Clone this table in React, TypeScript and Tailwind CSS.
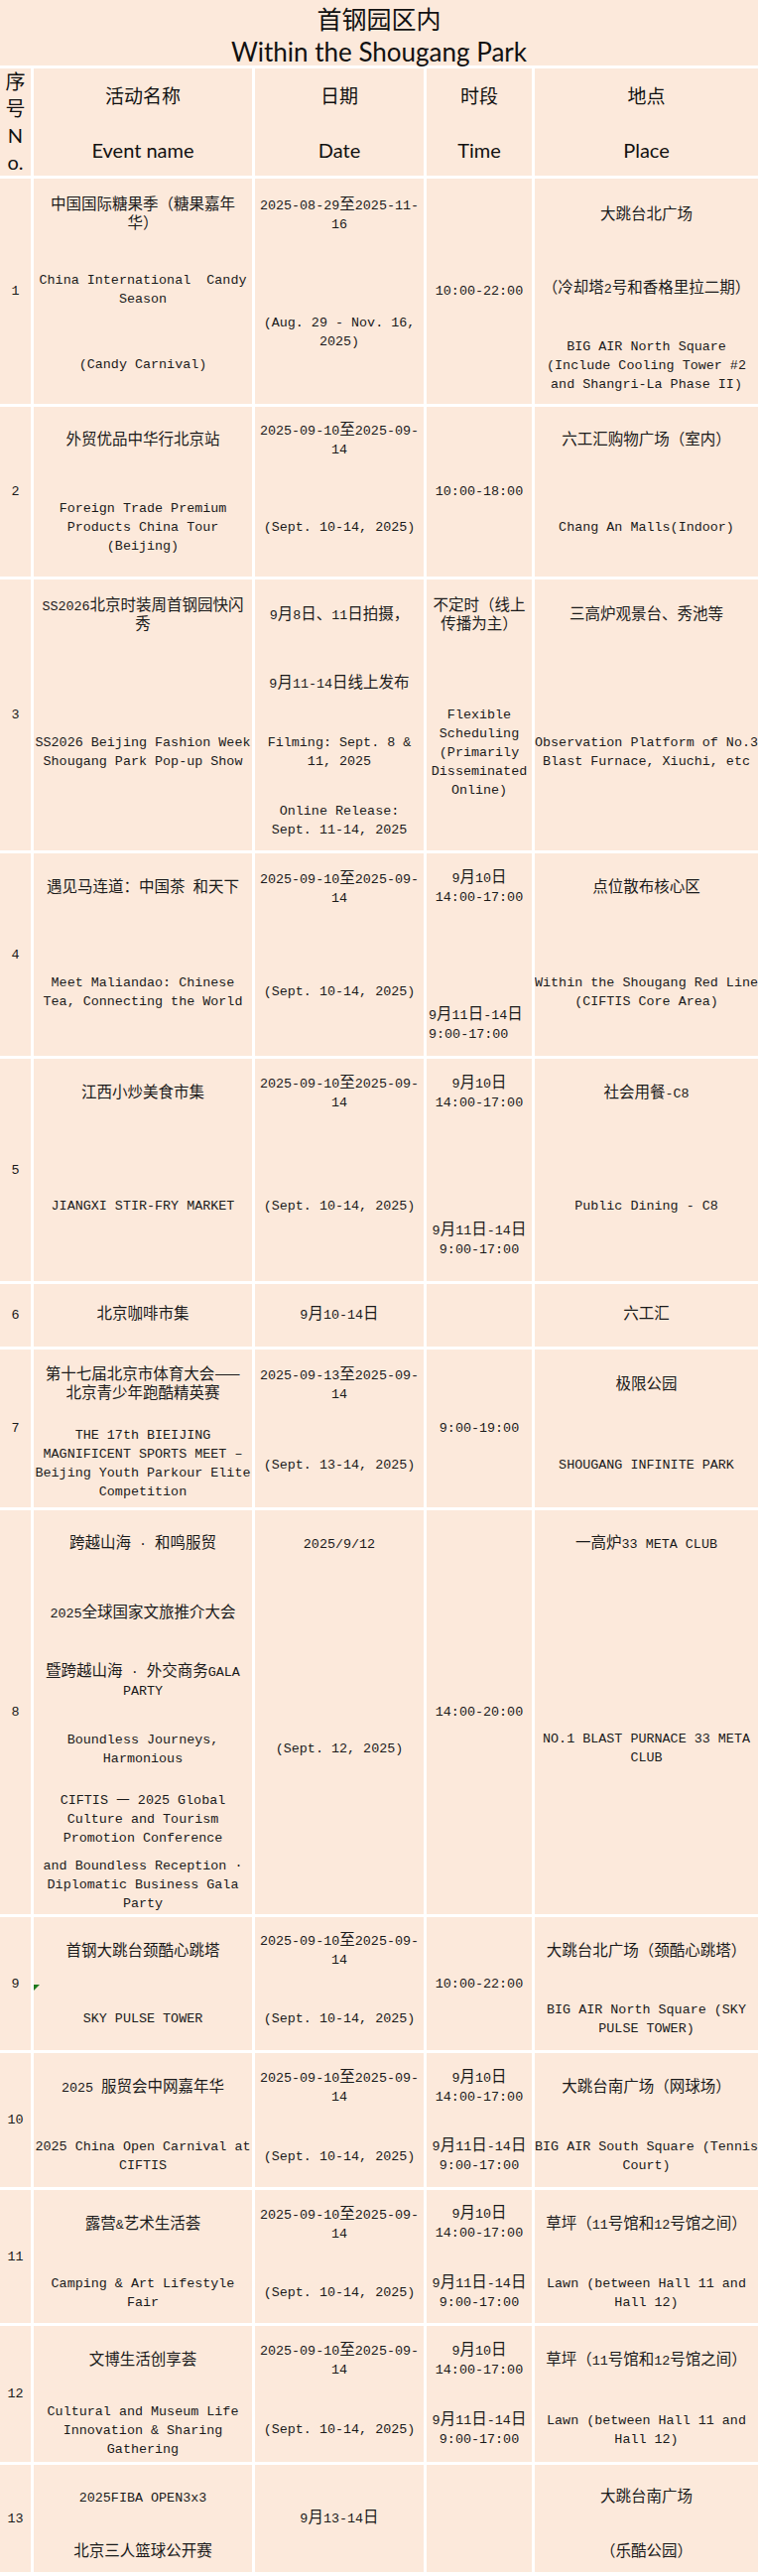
import React from "react";

type P = { m: string; l: string[]; a?: string };
type Cell = { ps: P[]; c?: boolean; tri?: boolean };
type Row = { h: string; no: string; cells: Cell[] };

const D1 = ["2025-09-10至2025-09-", "14"];
const SEPT = ["(Sept. 10-14, 2025)"];
const T1 = ["9月10日", "14:00-17:00"];
const T2 = ["9月11日-14日", "9:00-17:00"];

const rows: Row[] = [
  {
    h: "h-[227px]",
    no: "1",
    cells: [
      {
        ps: [
          { m: "mt-[18px]", l: ["中国国际糖果季（糖果嘉年", "华）"] },
          { m: "mt-[37px]", l: ["China International  Candy", "Season"] },
          { m: "mt-[47px]", l: ["(Candy Carnival)"] },
        ],
      },
      {
        ps: [
          { m: "mt-[18px]", l: ["2025-08-29至2025-11-", "16"] },
          { m: "mt-[80px]", l: ["(Aug. 29 - Nov. 16,", "2025)"] },
        ],
      },
      { c: true, ps: [{ m: "", l: ["10:00-22:00"] }] },
      {
        ps: [
          { m: "mt-[28px]", l: ["大跳台北广场"] },
          { m: "mt-[55px]", l: ["（冷却塔2号和香格里拉二期）"] },
          { m: "mt-[39px]", l: ["BIG AIR North Square", "(Include Cooling Tower #2", "and Shangri-La Phase II)"] },
        ],
      },
    ],
  },
  {
    h: "h-[171px]",
    no: "2",
    cells: [
      {
        ps: [
          { m: "mt-[25px]", l: ["外贸优品中华行北京站"] },
          { m: "mt-[49px]", l: ["Foreign Trade Premium", "Products China Tour", "(Beijing)"] },
        ],
      },
      { ps: [{ m: "mt-[15px]", l: D1 }, { m: "mt-[59px]", l: SEPT }] },
      { c: true, ps: [{ m: "", l: ["10:00-18:00"] }] },
      {
        ps: [
          { m: "mt-[25px]", l: ["六工汇购物广场（室内）"] },
          { m: "mt-[68px]", l: ["Chang An Malls(Indoor)"] },
        ],
      },
    ],
  },
  {
    h: "h-[273px]",
    no: "3",
    cells: [
      {
        ps: [
          { m: "mt-[18px]", l: ["SS2026北京时装周首钢园快闪", "秀"] },
          { m: "mt-[99px]", l: ["SS2026 Beijing Fashion Week", "Shougang Park Pop-up Show"] },
        ],
      },
      {
        ps: [
          { m: "mt-[27px]", l: ["9月8日、11日拍摄，"] },
          { m: "mt-[50px]", l: ["9月11-14日线上发布"] },
          { m: "mt-[40px]", l: ["Filming: Sept. 8 &", "11, 2025"] },
          { m: "mt-[31px]", l: ["Online Release:", "Sept. 11-14, 2025"] },
        ],
      },
      {
        ps: [
          { m: "mt-[18px]", l: ["不定时（线上", "传播为主）"] },
          { m: "mt-[71px]", l: ["Flexible", "Scheduling", "(Primarily", "Disseminated", "Online)"] },
        ],
      },
      {
        ps: [
          { m: "mt-[27px]", l: ["三高炉观景台、秀池等"] },
          { m: "mt-[109px]", l: ["Observation Platform of No.3", "Blast Furnace, Xiuchi, etc"] },
        ],
      },
    ],
  },
  {
    h: "h-[204px]",
    no: "4",
    cells: [
      {
        ps: [
          { m: "mt-[26px]", l: ["遇见马连道：中国茶 和天下"] },
          { m: "mt-[76px]", l: ["Meet Maliandao: Chinese", "Tea, Connecting the World"] },
        ],
      },
      { ps: [{ m: "mt-[17px]", l: D1 }, { m: "mt-[75px]", l: SEPT }] },
      {
        ps: [
          { m: "mt-[16px]", l: T1 },
          { m: "mt-[100px]", l: ["9月11日-14日", "9:00-17:00"], a: "self-start items-start pl-[2px]" },
        ],
      },
      {
        ps: [
          { m: "mt-[26px]", l: ["点位散布核心区"] },
          { m: "mt-[76px]", l: ["Within the Shougang Red Line", "(CIFTIS Core Area)"] },
        ],
      },
    ],
  },
  {
    h: "h-[224px]",
    no: "5",
    cells: [
      {
        ps: [
          { m: "mt-[26px]", l: ["江西小炒美食市集"] },
          { m: "mt-[94px]", l: ["JIANGXI STIR-FRY MARKET"] },
        ],
      },
      { ps: [{ m: "mt-[16px]", l: D1 }, { m: "mt-[85px]", l: SEPT }] },
      { ps: [{ m: "mt-[16px]", l: T1 }, { m: "mt-[110px]", l: T2 }] },
      {
        ps: [
          { m: "mt-[26px]", l: ["社会用餐-C8"] },
          { m: "mt-[94px]", l: ["Public Dining - C8"] },
        ],
      },
    ],
  },
  {
    h: "h-[63px]",
    no: "6",
    cells: [
      { c: true, ps: [{ m: "", l: ["北京咖啡市集"] }] },
      { c: true, ps: [{ m: "", l: ["9月10-14日"] }] },
      { c: true, ps: [] },
      { c: true, ps: [{ m: "", l: ["六工汇"] }] },
    ],
  },
  {
    h: "h-[159px]",
    no: "7",
    cells: [
      {
        ps: [
          { m: "mt-[17px]", l: ["第十七届北京市体育大会——", "北京青少年跑酷精英赛"] },
          {
            m: "mt-[22px]",
            l: ["THE 17th BIEIJING", "MAGNIFICENT SPORTS MEET –", "Beijing Youth Parkour Elite", "Competition"],
          },
        ],
      },
      {
        ps: [
          { m: "mt-[17px]", l: ["2025-09-13至2025-09-", "14"] },
          { m: "mt-[52px]", l: ["(Sept. 13-14, 2025)"] },
        ],
      },
      { c: true, ps: [{ m: "", l: ["9:00-19:00"] }] },
      {
        ps: [
          { m: "mt-[27px]", l: ["极限公园"] },
          { m: "mt-[61px]", l: ["SHOUGANG INFINITE PARK"] },
        ],
      },
    ],
  },
  {
    h: "h-[407px]",
    no: "8",
    cells: [
      {
        ps: [
          { m: "mt-[25px]", l: ["跨越山海 · 和鸣服贸"] },
          { m: "mt-[51px]", l: ["2025全球国家文旅推介大会"] },
          { m: "mt-[40px]", l: ["暨跨越山海 · 外交商务GALA", "PARTY"] },
          { m: "mt-[30px]", l: ["Boundless Journeys,", "Harmonious"] },
          { m: "mt-[23px]", l: ["CIFTIS — 2025 Global", "Culture and Tourism", "Promotion Conference"] },
          { m: "mt-[9px]", l: ["and Boundless Reception ·", "Diplomatic Business Gala", "Party"] },
        ],
      },
      {
        ps: [
          { m: "mt-[25px]", l: ["2025/9/12"] },
          { m: "mt-[187px]", l: ["(Sept. 12, 2025)"] },
        ],
      },
      { c: true, ps: [{ m: "", l: ["14:00-20:00"] }] },
      {
        ps: [
          { m: "mt-[25px]", l: ["一高炉33 META CLUB"] },
          { m: "mt-[177px]", l: ["NO.1 BLAST PURNACE 33 META", "CLUB"] },
        ],
      },
    ],
  },
  {
    h: "h-[134px]",
    no: "9",
    cells: [
      {
        tri: true,
        ps: [
          { m: "mt-[26px]", l: ["首钢大跳台颈酷心跳塔"] },
          { m: "mt-[48px]", l: ["SKY PULSE TOWER"] },
        ],
      },
      { ps: [{ m: "mt-[15px]", l: D1 }, { m: "mt-[40px]", l: SEPT }] },
      { c: true, ps: [{ m: "", l: ["10:00-22:00"] }] },
      {
        ps: [
          { m: "mt-[26px]", l: ["大跳台北广场（颈酷心跳塔）"] },
          { m: "mt-[39px]", l: ["BIG AIR North Square (SKY", "PULSE TOWER)"] },
        ],
      },
    ],
  },
  {
    h: "h-[135px]",
    no: "10",
    cells: [
      {
        ps: [
          { m: "mt-[26px]", l: ["2025 服贸会中网嘉年华"] },
          { m: "mt-[40px]", l: ["2025 China Open Carnival at", "CIFTIS"] },
        ],
      },
      { ps: [{ m: "mt-[16px]", l: D1 }, { m: "mt-[41px]", l: SEPT }] },
      { ps: [{ m: "mt-[16px]", l: T1 }, { m: "mt-[31px]", l: T2 }] },
      {
        ps: [
          { m: "mt-[26px]", l: ["大跳台南广场（网球场）"] },
          { m: "mt-[40px]", l: ["BIG AIR South Square (Tennis", "Court)"] },
        ],
      },
    ],
  },
  {
    h: "h-[134px]",
    no: "11",
    cells: [
      {
        ps: [
          { m: "mt-[26px]", l: ["露营&艺术生活荟"] },
          { m: "mt-[40px]", l: ["Camping & Art Lifestyle", "Fair"] },
        ],
      },
      { ps: [{ m: "mt-[16px]", l: D1 }, { m: "mt-[40px]", l: SEPT }] },
      { ps: [{ m: "mt-[15px]", l: T1 }, { m: "mt-[32px]", l: T2 }] },
      {
        ps: [
          { m: "mt-[26px]", l: ["草坪（11号馆和12号馆之间）"] },
          { m: "mt-[40px]", l: ["Lawn (between Hall 11 and", "Hall 12)"] },
        ],
      },
    ],
  },
  {
    h: "h-[137px]",
    no: "12",
    cells: [
      {
        ps: [
          { m: "mt-[26px]", l: ["文博生活创享荟"] },
          { m: "mt-[32px]", l: ["Cultural and Museum Life", "Innovation & Sharing", "Gathering"] },
        ],
      },
      { ps: [{ m: "mt-[16px]", l: D1 }, { m: "mt-[41px]", l: SEPT }] },
      { ps: [{ m: "mt-[16px]", l: T1 }, { m: "mt-[32px]", l: T2 }] },
      {
        ps: [
          { m: "mt-[26px]", l: ["草坪（11号馆和12号馆之间）"] },
          { m: "mt-[41px]", l: ["Lawn (between Hall 11 and", "Hall 12)"] },
        ],
      },
    ],
  },
  {
    h: "h-[108px]",
    no: "13",
    cells: [
      {
        ps: [
          { m: "mt-[24px]", l: ["2025FIBA OPEN3x3"] },
          { m: "mt-[36px]", l: ["北京三人篮球公开赛"] },
        ],
      },
      { c: true, ps: [{ m: "", l: ["9月13-14日"] }] },
      { c: true, ps: [] },
      {
        ps: [
          { m: "mt-[24px]", l: ["大跳台南广场"] },
          { m: "mt-[36px]", l: ["（乐酷公园）"] },
        ],
      },
    ],
  },
];

const GRID = "grid grid-cols-[31px_220px_170px_106px_1fr] gap-x-[3px]";
const CELL = "bg-[#fce9db] min-h-0 overflow-hidden";
const BODY =
  "font-['Liberation_Mono','Noto_Sans_CJK_SC',monospace] text-[13.4px] leading-[19px] text-[#1a1a1a]";
const HEAD = "font-['Lato','Noto_Sans_CJK_SC',sans-serif] text-[19px] leading-[26px] text-[#111]";

const CJK = /([\u2014\u3000-\u303f\u4e00-\u9fff\uff00-\uffef]+)/;

function Mixed({ s }: { s: string }) {
  const parts = s.split(CJK);
  return (
    <>
      {parts.map((part, i) =>
        i % 2 === 1 ? (
          <span
            key={i}
            className="leading-[12px] font-['Noto_Sans_CJK_SC',sans-serif] text-[15.5px] [text-spacing-trim:space-all]"
          >
            {part}
          </span>
        ) : (
          <React.Fragment key={i}>{part}</React.Fragment>
        )
      )}
    </>
  );
}

function Header() {
  const cols = [
    ["活动名称", "Event name"],
    ["日期", "Date"],
    ["时段", "Time"],
    ["地点", "Place"],
  ];
  return (
    <div className={`${GRID} h-[108px] ${HEAD}`}>
      <div className={`${CELL} flex flex-col items-center text-[20px] leading-[27px]`}>
        <div>序</div>
        <div>号</div>
        <div>N</div>
        <div>o.</div>
      </div>
      {cols.map((c) => (
        <div key={c[1]} className={`${CELL} flex flex-col items-center`}>
          <div className="mt-[15px]">{c[0]}</div>
          <div className="mt-[28px] text-[20px]">{c[1]}</div>
        </div>
      ))}
    </div>
  );
}

function BodyRow({ row }: { row: Row }) {
  return (
    <div className={`${GRID} ${row.h} ${BODY}`}>
      <div className={`${CELL} flex items-center justify-center`}>{row.no}</div>
      {row.cells.map((cell, i) => (
        <div
          key={i}
          className={`${CELL} relative flex flex-col items-center text-center ${cell.c ? "justify-center" : ""}`}
        >
          {cell.tri && (
            <svg className="absolute left-0 top-[68px]" width="6" height="6" viewBox="0 0 6 6">
              <polygon points="0,0 6,0 0,6" fill="#1f7a1f" />
            </svg>
          )}
          {cell.ps.map((p, j) => (
            <div key={j} className={`${p.m} flex flex-col items-center ${p.a ?? ""}`}>
              {p.l.map((line, k) => (
                <div key={k} className="whitespace-pre h-[19px]">
                  <Mixed s={line} />
                </div>
              ))}
            </div>
          ))}
        </div>
      ))}
    </div>
  );
}

export default function App() {
  return (
    <div className="w-[764px] bg-white">
      <div className="h-[66px] bg-[#fce9db] flex flex-col items-center text-[#111]">
        <div className="mt-[3px] text-[25px] leading-[30px] font-['Noto_Sans_CJK_SC',sans-serif]">首钢园区内</div>
        <div className="mt-[4px] text-[26px] leading-[30px] font-['Lato',sans-serif]">Within the Shougang Park</div>
      </div>
      <div className="flex flex-col gap-y-[3px] pt-[3px] pb-[4px]">
        <Header />
        {rows.map((r) => (
          <BodyRow key={r.no} row={r} />
        ))}
      </div>
    </div>
  );
}
